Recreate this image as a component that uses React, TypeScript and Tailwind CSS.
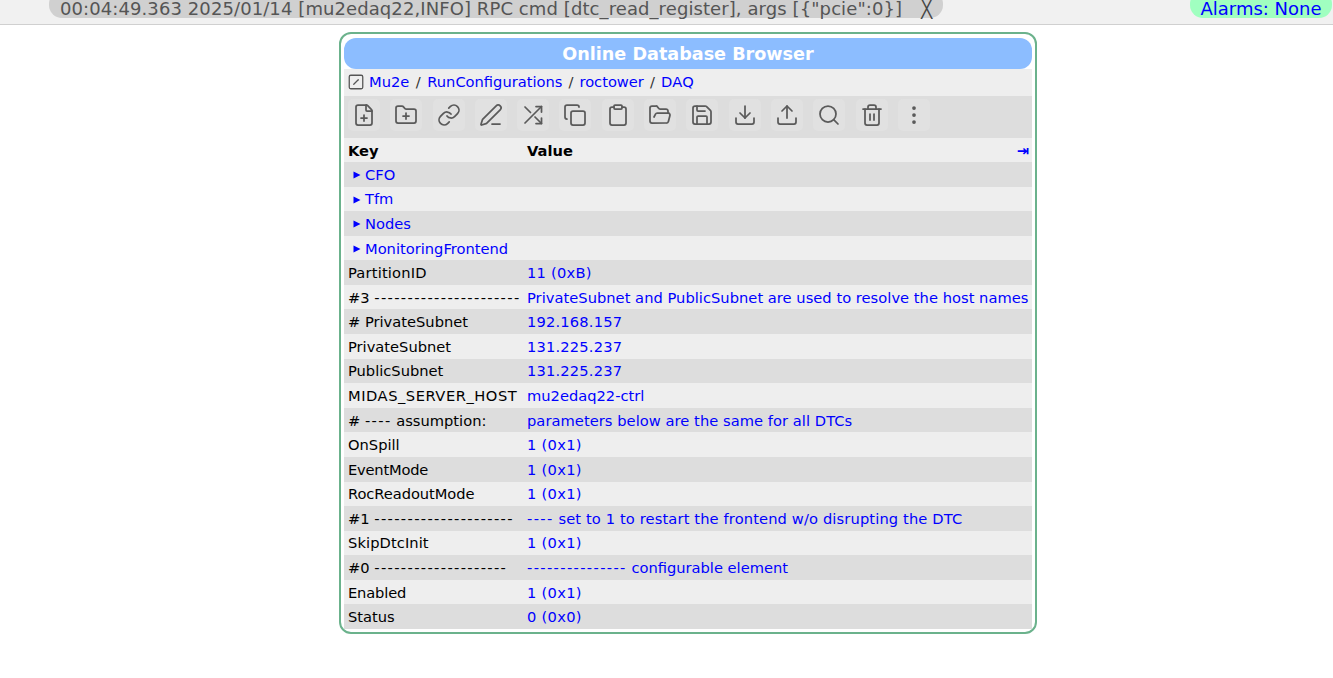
import React from "react";
import { FilePlus, FolderPlus, Link, PenLine, Copy, Clipboard, FolderOpen, Save, Download, Upload, Search, Trash2, MoreVertical, SquareSlash } from "lucide-react";

function ShuffleX({ size, strokeWidth, className }: { size: number; strokeWidth: number; className: string }) {
  return (
    <svg width={size} height={size} viewBox="0 0 24 24" fill="none" stroke="currentColor" strokeWidth={strokeWidth} strokeLinecap="round" strokeLinejoin="round" className={className}>
      <path d="M4 4l5.5 5.5M14 14l6.5 6.5" />
      <path d="M20.5 15v5.5H15" />
      <path d="M4 20L20.5 3.5" />
      <path d="M15 3.5h5.5V9" />
    </svg>
  );
}

const icons = [FilePlus, FolderPlus, Link, PenLine, ShuffleX, Copy, Clipboard, FolderOpen, Save, Download, Upload, Search, Trash2, MoreVertical];

type Row = { k: string; v?: string; tree?: boolean; kc?: string; vc?: string };

const rows: Row[] = [
  { k: "CFO", tree: true },
  { k: "Tfm", tree: true },
  { k: "Nodes", tree: true },
  { k: "MonitoringFrontend", tree: true },
  { k: "PartitionID", v: "11 (0xB)", kc: "tracking-[0.18px]", vc: "tracking-[0.25px]" },
  { k: "#3 ----------------------", v: "PrivateSubnet and PublicSubnet are used to resolve the host names", vc: "tracking-[0.03px]" },
  { k: "# PrivateSubnet", v: "192.168.157", vc: "tracking-[0.18px]" },
  { k: "PrivateSubnet", v: "131.225.237", vc: "tracking-[0.18px]" },
  { k: "PublicSubnet", v: "131.225.237", vc: "tracking-[0.18px]" },
  { k: "MIDAS_SERVER_HOST", v: "mu2edaq22-ctrl", kc: "tracking-[0.53px]" },
  { k: "# ---- assumption:", v: "parameters below are the same for all DTCs", vc: "tracking-[0.05px]" },
  { k: "OnSpill", v: "1 (0x1)", vc: "tracking-[0.29px]" },
  { k: "EventMode", v: "1 (0x1)", kc: "tracking-[-0.2px]", vc: "tracking-[0.29px]" },
  { k: "RocReadoutMode", v: "1 (0x1)", kc: "tracking-[-0.07px]", vc: "tracking-[0.29px]" },
  { k: "#1 ---------------------", v: "---- set to 1 to restart the frontend w/o disrupting the DTC", vc: "tracking-[0.13px]" },
  { k: "SkipDtcInit", v: "1 (0x1)", kc: "tracking-[0.09px]", vc: "tracking-[0.29px]" },
  { k: "#0 --------------------", v: "--------------- configurable element" },
  { k: "Enabled", v: "1 (0x1)", kc: "tracking-[-0.14px]", vc: "tracking-[0.29px]" },
  { k: "Status", v: "0 (0x0)", vc: "tracking-[0.29px]" },
];

function Txt({ s }: { s: string }) {
  return (
    <>
      {s.split(/(-{2,})/).map((p, i) =>
        p.startsWith("--") ? (
          <span key={i} className="tracking-[1.36px]">{p}</span>
        ) : (
          <span key={i}>{p}</span>
        )
      )}
    </>
  );
}

export default function App() {
  return (
    <div className="min-h-[678px] bg-white font-['DejaVu_Sans',sans-serif] text-[14.67px] text-black">
      <div className="flex h-[25px] items-start justify-between overflow-hidden border-b border-[#d0d0d0] bg-[#f1f1f1]">
        <div className="ml-[49px] mt-[-9px] flex h-[27px] w-[894px] items-end whitespace-pre rounded-[13px] bg-[#d0d0d0] pl-[11px] text-[18px] leading-[18px] tracking-[0.09px] text-[#555]">
          <span>00:04:49.363 2025/01/14 [mu2edaq22,INFO] RPC cmd [dtc_read_register], args [{'{'}"pcie":0{'}'}]</span>
          <span className="ml-[19px] text-[#444]">╳</span>
        </div>
        <div className="mt-[-9px] mr-[1px] flex h-[27px] w-[142px] items-end justify-center rounded-[13px] bg-[#a0ffc0] text-[18px] leading-[18px] text-[#0000ff]">
          Alarms: None
        </div>
      </div>
      <div className="ml-[339px] mt-[7px] w-[698px] rounded-[12px] border-2 border-[#6bb28c] bg-white px-[3px] pb-[3px] pt-[4px]">
        <div className="flex h-[31px] items-center justify-center rounded-[12px] bg-[#8cbdff] pt-[2px] text-[17.6px] font-bold text-white">
          Online Database Browser
        </div>
        <div className="flex h-[27px] items-center whitespace-pre bg-[#eeeeee] pl-[3px] pb-[1px]">
          <SquareSlash size={18} strokeWidth={1.7} className="mr-[4px] text-[#555]" />
          <span className="text-[#0000ff]">Mu2e</span>
          <span className="w-[18px] text-center text-[#333]">/</span>
          <span className="text-[#0000ff]">RunConfigurations</span>
          <span className="w-[17px] text-center text-[#333]">/</span>
          <span className="text-[#0000ff]">roctower</span>
          <span className="w-[17px] text-center text-[#333]">/</span>
          <span className="tracking-[0.3px] text-[#0000ff]">DAQ</span>
        </div>
        <div className="flex h-[42px] items-start gap-[10.3px] bg-[#dddddd] pl-[4px] pt-[3px]">
          {icons.map((I, i) => (
            <div key={i} className="flex h-[32px] w-[32px] items-center justify-center rounded-[5px] bg-[#e1e1e1]">
              <I size={24} strokeWidth={1.75} className="text-[#5a5a5a]" />
            </div>
          ))}
        </div>
        <div className="flex h-[24px] items-center justify-between bg-[#eeeeee] pl-[4px] pr-[3px] pt-[2px] font-bold">
          <div className="flex">
            <span className="w-[179px]">Key</span>
            <span>Value</span>
          </div>
          <span className="text-[#0000ff]">⇥</span>
        </div>
        {rows.map((r, i) => (
          <div key={i} className={`flex h-[24.58px] items-center whitespace-pre pl-[4px] pt-[1px] ${i % 2 === 0 ? "bg-[#dddddd]" : "bg-[#eeeeee]"}`}>
            {r.tree ? (
              <span className="flex items-center text-[#0000ff]">
                <svg width="8" height="8" viewBox="0 0 8 8" className="ml-[5px] mr-[4px] mt-[1px]">
                  <path d="M0.5 0.5L7.5 4L0.5 7.5Z" fill="#0000ff" />
                </svg>
                {r.k}
              </span>
            ) : (
              <>
                <span className={`w-[179px] ${r.kc ?? ""}`}><Txt s={r.k} /></span>
                <span className={`text-[#0000ff] ${r.vc ?? ""}`}><Txt s={r.v ?? ""} /></span>
              </>
            )}
          </div>
        ))}
      </div>
    </div>
  );
}
